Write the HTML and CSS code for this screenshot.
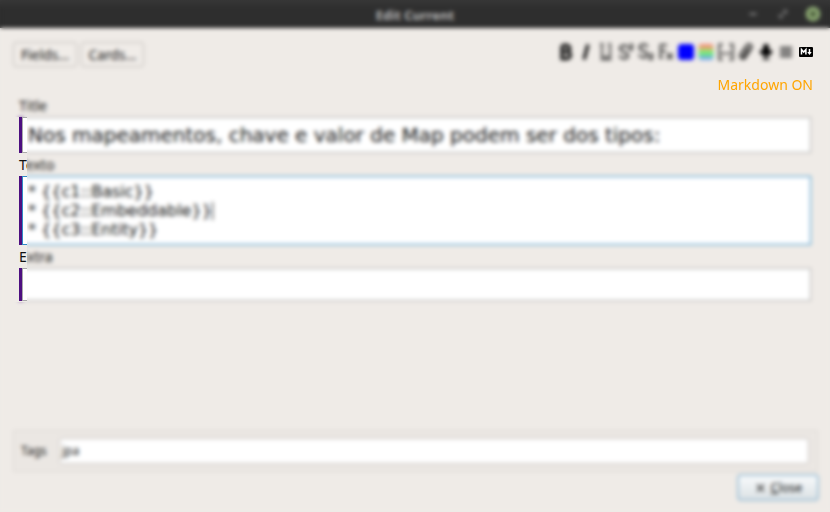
FILE: index.html
```html
<!DOCTYPE html>
<html lang="pt">
<head>
<meta charset="utf-8">
<title>Edit Current</title>
<link rel="stylesheet" href="styles.css">
</head>
<body>
<div class="window">
  <header class="titlebar">
    <span class="spacer"></span>
    <h1>Edit Current</h1>
    <div class="controls">
      <svg width="16" height="16" viewBox="0 0 16 16"><path d="M4.500 8h7" stroke="#888" stroke-width="2"/></svg>
      <svg width="16" height="16" viewBox="0 0 16 16"><path d="M8 4.500h3.500V8M4.500 8v3.500H8M11 5l-6 6" fill="none" stroke="#777" stroke-width="1.300"/></svg>
      <svg width="16" height="16" viewBox="0 0 16 16"><circle cx="8" cy="8" r="7.300" fill="#8fac75"/><path d="M5.500 5.500l5 5m0-5l-5 5" stroke="#39472e" stroke-width="2"/></svg>
    </div>
  </header>
  <div class="toolbar">
    <button class="tool-button fields">Fields...</button>
    <button class="tool-button cards">Cards...</button>
    <div class="icons">
      <svg viewBox="0 0 20 20"><path d="M6 3.500v13h5a3.400 3.400 0 0 0 0-6.800H6M6 3.500h4.600a3.100 3.100 0 0 1 0 6.200" fill="none" stroke="#111" stroke-width="3.300"/></svg>
      <svg viewBox="0 0 20 20"><path d="M12 2.500L8 17.500" stroke="#111" stroke-width="3.200"/></svg>
      <svg viewBox="0 0 20 20"><path d="M6 2v13h8V2M4 2h3.500M12 2h3M4.500 17.300h11" fill="none" stroke="#333" stroke-width="1.700"/></svg>
      <svg viewBox="0 0 20 20"><path d="M12 6c-1-4-8-3-8 .5 0 4 8 3 8 7s-7 4-8.500 0M14 3.500c1-2 3-.5 2 1l-2 3h3" fill="none" stroke="#333" stroke-width="2"/></svg>
      <svg viewBox="0 0 20 20"><path d="M11.500 5c-1-4-8-3-8 .5 0 4 8 3 8 7s-7 4-8.500 0M14 13c1-2 3-.5 2 1l-2 3h3" fill="none" stroke="#333" stroke-width="2"/></svg>
      <svg viewBox="0 0 20 20"><path d="M11 3H4.500v12.500M3 15.500h4M4.500 9H10M11 11.500l5.500 5.500m0-5.500L11 17" fill="none" stroke="#333" stroke-width="1.800"/></svg>
      <svg viewBox="0 0 20 20"><rect x="2" y="2" width="16" height="16" rx="3.500" fill="#00f"/></svg>
      <svg viewBox="0 0 20 20"><defs><linearGradient id="rainbow" x2="0" y2="1"><stop offset=".1" stop-color="#f58b78"/><stop offset=".35" stop-color="#bdcf70"/><stop offset=".58" stop-color="#68ec78"/><stop offset=".76" stop-color="#72cfb5"/><stop offset=".95" stop-color="#739cf5"/></linearGradient></defs><rect x="2.500" y="2" width="15" height="16" rx="3" fill="url(#rainbow)"/></svg>
      <svg viewBox="0 0 20 20"><path d="M6.500 2.500H3.300v15H6.500M13.500 2.500h3.200v15H13.500M5 11.500h3M8.700 11.500h2.600M12 11.500h3" fill="none" stroke="#333" stroke-width="1.800"/></svg>
      <svg viewBox="0 0 20 20"><path d="M12.500 6l-4.500 7c-1 2 1 3 2.200 1.200l4.800-7.500c2-3.700-2.500-6-4.700-2.700L5 11.500c-2.500 4.500 2 6.500 4.500 4" fill="none" stroke="#222" stroke-width="2"/></svg>
      <svg viewBox="0 0 20 20"><rect x="7" y="2" width="6" height="10.500" rx="3"/><path d="M4.500 9c0 5.500 11 5.500 11 0zM10 12v5M6.500 17h7" fill="#000" stroke="#000" stroke-width="1.700"/></svg>
      <svg viewBox="0 0 20 20"><path d="M4 6h12M4 10h12M4 14h12" stroke="#444" stroke-width="2.300"/></svg>
      <svg class="crisp" viewBox="0 0 20 20"><rect x="3" y="5" width="14" height="10" rx="1" fill="#000"/><path d="M5.500 12.500v-5l2.200 2.600 2.200-2.600v5M13.500 7v4.500" fill="none" stroke="#fff" stroke-width="1.500"/><path d="M11.300 10h4.400l-2.200 3z" fill="#fff"/></svg>
    </div>
  </div>
  <div class="status">Markdown ON</div>
  <main class="fields-list">
    <label>Title</label>
    <div class="field title-field">Nos mapeamentos, chave e valor de Map podem ser dos tipos:</div>
    <label>Texto</label>
    <div class="field text-field focused">* {{c1::Basic}}<br>* {{c2::Embeddable}}<span class="caret"></span><br>* {{c3::Entity}}</div>
    <label>Extra</label>
    <div class="field extra-field"></div>
  </main>
  <section class="tags">
    <span>Tags</span>
    <div class="tag-input">jpa</div>
  </section>
  <footer>
    <button class="close"><svg width="10" height="10" viewBox="0 0 10 10"><path d="M1 1.500l7 7m0-7l-7 7" stroke="#555" stroke-width="1.800"/></svg><span><u>C</u>lose</span></button>
  </footer>
  <div class="veil"></div>
</div>
</body>
</html>
```

FILE: styles.css
```css
* { box-sizing: border-box; }
body {
  margin: 0;
  font-family: "Noto Sans", sans-serif;
  font-size: 13px;
  color: #111;
}
.window {
  position: relative;
  display: flex;
  flex-direction: column;
  width: 830px;
  height: 512px;
  overflow: hidden;
  background: #efebe7;
}
/* Softens the dialog, leaving the marker strip of the fields in focus. */
.veil {
  position: absolute;
  inset: 0;
  z-index: 1;
  pointer-events: none;
  backdrop-filter: blur(1.95px);
  clip-path: polygon(evenodd, 0 0, 830px 0, 830px 512px, 0 512px, 0 0, 14px 117px, 27px 117px, 27px 302px, 14px 302px, 14px 117px, 0 0);
}
.titlebar {
  display: grid;
  grid-template-columns: 1fr auto 1fr;
  align-items: center;
  flex: none;
  height: 28px;
  background: linear-gradient(#383838, #2e2e2e 30%);
}
.titlebar h1 {
  margin: 2px 0 0;
  font-size: 13px;
  line-height: 18px;
  color: #b8b8b8;
}
.controls {
  display: flex;
  justify-content: flex-end;
  gap: 14px;
  padding-right: 9px;
}
.toolbar {
  display: flex;
  gap: 4px;
  flex: none;
  height: 47px;
  padding: 14px 14px 0 13px;
}
.tool-button {
  height: 25px;
  padding: 0;
  border: 1px solid #c0bcb8;
  border-radius: 3px;
  background: #f0ece8;
  color: #111;
  font: 13.8px "Noto Sans", sans-serif;
}
.fields { width: 64px; }
.cards { width: 63px; }
.icons {
  display: flex;
  margin-left: auto;
}
.icons svg {
  width: 20px;
  height: 20px;
}
.icons .crisp {
  position: relative;
  z-index: 2;
}
.status {
  position: relative;
  z-index: 2;
  flex: none;
  height: 22px;
  padding-right: 17px;
  text-align: right;
  font-size: 14px;
  line-height: 20px;
  color: #ffa500;
}
.fields-list {
  display: flex;
  flex-direction: column;
  flex: none;
  height: 333px;
  padding: 0 19px 0 19px;
}
label {
  height: 23px;
  font-size: 14px;
  line-height: 18px;
  padding-top: 3px;
}
label:first-child { height: 20px; padding-top: 0; }
.field {
  flex: none;
  padding: 5px;
  border: 1px solid #aaa;
  border-left: 0;
  background: linear-gradient(90deg, #4d0f80 3px, #aaa 3px, #aaa 4px, #fff 4px) border-box;
  font-family: "DejaVu Sans", sans-serif;
  white-space: nowrap;
}
/* The marker bar runs over the full height of the field, borders included. */
.field::before {
  content: "";
  float: left;
  width: 3px;
  height: calc(100% + 12px);
  margin: -6px 0 -6px -9px;
  background: #4d0f80;
}
.title-field {
  height: 36px;
  padding-left: 9px;
  font-size: 20px;
  line-height: 25px;
}
.title-field::before,
.text-field::before { margin-right: 6px; }
.text-field {
  height: 69px;
  padding-left: 9px;
  font-size: 16px;
  line-height: 19px;
}
.focused {
  border-color: #308cc6;
  background: linear-gradient(90deg, #4d0f80 3px, #308cc6 3px, #308cc6 4px, #fff 4px) border-box;
}
.extra-field {
  height: 33px;
  padding-left: 9px;
}
.caret {
  display: inline-block;
  width: 1px;
  height: 18px;
  vertical-align: -4px;
  background: #111;
}
.tags {
  display: flex;
  align-items: center;
  flex: none;
  height: 42px;
  margin: 0 12px 0 13px;
  padding: 0 8px 0 7px;
  border: 1px solid #dedad6;
  background: #ebe7e3;
  font-size: 12px;
}
.tags > span {
  width: 38px;
  padding-bottom: 2px;
}
.tag-input {
  flex: 1;
  height: 26px;
  padding-left: 2px;
  border: 1px solid #c5c1bd;
  border-radius: 3px;
  background: #fff;
  line-height: 24px;
}
footer {
  display: flex;
  justify-content: flex-end;
  padding: 2px 11px 0;
}
.close {
  display: flex;
  align-items: center;
  justify-content: center;
  gap: 5px;
  width: 82px;
  height: 27px;
  padding: 0 0 0 2px;
  border: 2px solid #a5c4d8;
  border-radius: 4px;
  background: linear-gradient(#f8fafb, #dce2e5);
  color: #111;
  font: 12.6px "Noto Sans", sans-serif;
}
```
